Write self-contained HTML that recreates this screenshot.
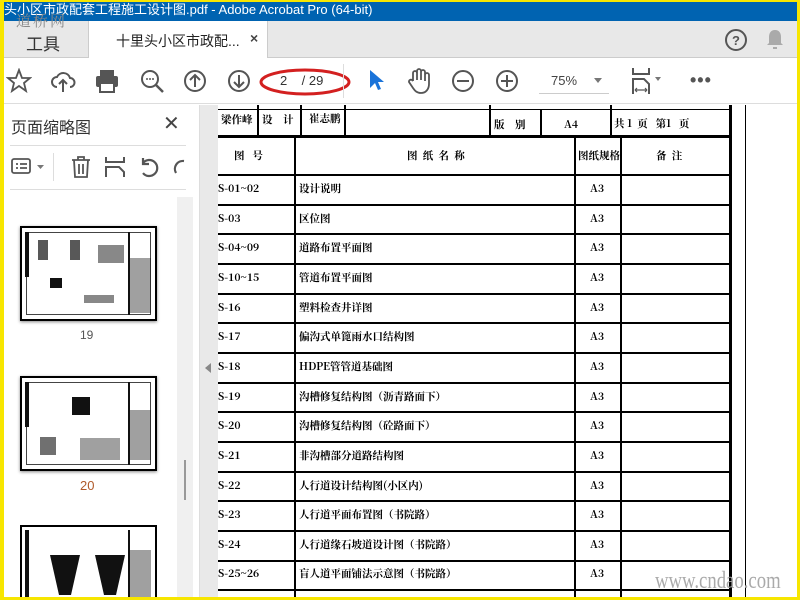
<!DOCTYPE html>
<html><head><meta charset="utf-8"><style>
*{margin:0;padding:0;box-sizing:border-box}
body{width:800px;height:600px;overflow:hidden;position:relative;background:#fff;font-family:"Liberation Sans","Noto Sans CJK SC",sans-serif}
.a{position:absolute}
.t{font-family:"Noto Serif CJK SC",serif;font-weight:bold;font-size:10.5px;line-height:12px;color:#000;white-space:nowrap}
.hl{position:absolute;height:1.5px;background:#000}
.vl{position:absolute;width:1.5px;background:#000}
svg{position:absolute}
.th{position:absolute;background:#111}
</style></head><body>
<div class="a" style="left:0;top:0;width:800px;height:21px;background:#0063b1;color:#fff;font-size:13px;line-height:20px;padding-left:4px;white-space:nowrap">头小区市政配套工程施工设计图.pdf - Adobe Acrobat Pro (64-bit)</div>
<div class="a" style="left:0;top:21px;width:800px;height:37px;background:#e8e8e8;border-bottom:1px solid #ccc"></div>
<div class="a" style="left:26px;top:30px;font-size:17px;color:#333">工具</div>
<div class="a" style="left:16px;top:10px;font-size:15px;color:#888;font-family:'Noto Serif CJK SC',serif;letter-spacing:2px">道桥网</div>
<div class="a" style="left:88px;top:21px;width:180px;height:38px;background:#fff;border-left:1px solid #ccc;border-right:1px solid #ccc"></div>
<div class="a" style="left:116px;top:31px;font-size:14px;color:#222">十里头小区市政配...</div>
<div class="a" style="left:250px;top:30px;font-size:14px;color:#444;font-weight:bold">×</div>
<svg style="left:724px;top:28px" width="24" height="24"><circle cx="12" cy="12" r="10" fill="none" stroke="#555" stroke-width="2"/><text x="12" y="17" font-size="13" text-anchor="middle" fill="#555" font-weight="bold" font-family="Liberation Sans">?</text></svg>
<svg style="left:765px;top:28px" width="20" height="22"><path d="M10 2c-4 0-6 3-6 7v6l-2 2h16l-2-2V9c0-4-2-7-6-7z M8 19h4v2H8z" fill="#aaa"/></svg>
<div class="a" style="left:0;top:58px;width:800px;height:46px;background:#fff;border-bottom:1px solid #ddd"></div>
<svg style="left:6px;top:68px" width="26" height="26"><path d="M13 2l3 8h8l-6 5 2 8-7-5-7 5 2-8-6-5h8z" fill="none" stroke="#555" stroke-width="1.8"/></svg>
<svg style="left:50px;top:68px" width="26" height="26"><path d="M7 19a5 5 0 0 1 0-10 7 7 0 0 1 13 1 4.5 4.5 0 0 1 0 9M13 24V12M9 16l4-4 4 4" fill="none" stroke="#555" stroke-width="2"/></svg>
<svg style="left:94px;top:68px" width="26" height="26"><rect x="6" y="2" width="14" height="6" fill="#555"/><rect x="2" y="8" width="22" height="11" rx="2" fill="#555"/><rect x="6" y="15" width="14" height="9" fill="#fff" stroke="#555" stroke-width="2"/></svg>
<svg style="left:139px;top:68px" width="26" height="26"><circle cx="11" cy="11" r="8" fill="none" stroke="#555" stroke-width="2"/><path d="M17 17l7 7" stroke="#555" stroke-width="2.5"/><circle cx="8" cy="11" r="1" fill="#555"/><circle cx="11" cy="11" r="1" fill="#555"/><circle cx="14" cy="11" r="1" fill="#555"/></svg>
<svg style="left:183px;top:69px" width="24" height="24"><circle cx="12" cy="12" r="10" fill="none" stroke="#555" stroke-width="2"/><path d="M12 18V6M7 11l5-5 5 5" fill="none" stroke="#555" stroke-width="2"/></svg>
<svg style="left:227px;top:69px" width="24" height="24"><circle cx="12" cy="12" r="10" fill="none" stroke="#555" stroke-width="2"/><path d="M12 6v12M7 13l5 5 5-5" fill="none" stroke="#555" stroke-width="2"/></svg>
<svg style="left:258px;top:66px" width="96" height="32"><ellipse cx="47" cy="16" rx="44" ry="12" fill="none" stroke="#d32020" stroke-width="3"/></svg>
<div class="a" style="left:280px;top:73px;font-size:13px;color:#333">2&nbsp;&nbsp;&nbsp;&nbsp;/ 29</div>
<div class="a" style="left:343px;top:64px;width:1px;height:34px;background:#ddd"></div>
<svg style="left:367px;top:68px" width="18" height="24"><path d="M3 2v18l5-5 3 7 3-1-3-7h6z" fill="#1a73d9"/></svg>
<svg style="left:406px;top:67px" width="26" height="28"><path d="M7 14V6a2 2 0 0 1 4 0v7V4a2 2 0 0 1 4 0v9V5a2 2 0 0 1 4 0v9V8a2 2 0 0 1 4 0v9c0 5-3 9-8 9-4 0-6-2-8-5l-4-6a2 2 0 0 1 3-2l1 1" fill="none" stroke="#555" stroke-width="1.8"/></svg>
<svg style="left:451px;top:69px" width="24" height="24"><circle cx="12" cy="12" r="10" fill="none" stroke="#555" stroke-width="2"/><path d="M6 12h12" stroke="#555" stroke-width="2"/></svg>
<svg style="left:495px;top:69px" width="24" height="24"><circle cx="12" cy="12" r="10" fill="none" stroke="#555" stroke-width="2"/><path d="M6 12h12M12 6v12" stroke="#555" stroke-width="2"/></svg>
<div class="a" style="left:551px;top:73px;font-size:13px;color:#444">75%</div>
<div class="a" style="left:594px;top:78px;width:0;height:0;border-left:4px solid transparent;border-right:4px solid transparent;border-top:5px solid #777"></div>
<div class="a" style="left:539px;top:93px;width:70px;height:1px;background:#ccc"></div>
<svg style="left:630px;top:67px" width="34" height="28"><path d="M3 1v6h16V1" fill="none" stroke="#555" stroke-width="2"/><path d="M3 27V12h11l5 5v10" fill="none" stroke="#555" stroke-width="2"/><path d="M5 23h12M5 23l2-2M5 23l2 2M17 23l-2-2M17 23l-2 2" stroke="#555" stroke-width="1.2" fill="none"/><path d="M25 10h6l-3 4z" fill="#777"/></svg>
<div class="a" style="left:690px;top:70px;font-size:18px;color:#555;letter-spacing:1px;font-weight:bold">•••</div>
<div class="a" style="left:0;top:105px;width:200px;height:495px;background:#fff;border-right:1px solid #ddd"></div>
<div class="a" style="left:11px;top:114px;font-size:16px;color:#333">页面缩略图</div>
<div class="a" style="left:163px;top:111px;font-size:20px;color:#444">✕</div>
<div class="a" style="left:10px;top:145px;width:176px;height:1px;background:#ddd"></div>
<svg style="left:11px;top:156px" width="36" height="22"><rect x="1" y="3" width="18" height="14" rx="2" fill="none" stroke="#555" stroke-width="1.8"/><path d="M5 8h2M9 8h7M5 12h2M9 12h7" stroke="#555" stroke-width="1.8"/><path d="M26 9h7l-3.5 4z" fill="#777"/></svg>
<div class="a" style="left:53px;top:153px;width:1px;height:28px;background:#ddd"></div>
<svg style="left:70px;top:155px" width="22" height="24"><path d="M2 5h18M8 5V2h6v3M4 5l1 17h12l1-17M9 9v10M13 9v10" fill="none" stroke="#555" stroke-width="1.8"/></svg>
<svg style="left:104px;top:155px" width="22" height="24"><path d="M2 2v5h18V2M2 22V12h13l5 5v5" fill="none" stroke="#555" stroke-width="2"/></svg>
<svg style="left:137px;top:155px" width="24" height="24"><path d="M6 8a8 8 0 1 1 0 10M6 3v6h6" fill="none" stroke="#555" stroke-width="2.2"/></svg>
<svg style="left:170px;top:155px" width="16" height="24"><path d="M14 6a8 8 0 0 0-8 12" fill="none" stroke="#555" stroke-width="2.2"/></svg>
<div class="a" style="left:10px;top:189px;width:176px;height:1px;background:#ddd"></div>
<div class="a" style="left:177px;top:197px;width:16px;height:403px;background:#f0f0f0"></div>
<div class="a" style="left:184px;top:460px;width:2px;height:40px;background:#999"></div>
<div class="a" style="left:20px;top:226px;width:137px;height:95px;border:2px solid #000;background:#fff;box-shadow:0 1px 3px #888"></div>
<div class="a" style="left:26px;top:232px;width:125px;height:83px;border:1px solid #444;background:#fff"></div>
<div class="th" style="left:25px;top:232px;width:4px;height:45px"></div>
<div class="th" style="left:38px;top:240px;width:10px;height:20px;opacity:.7"></div>
<div class="th" style="left:70px;top:240px;width:10px;height:20px;opacity:.7"></div>
<div class="th" style="left:98px;top:245px;width:26px;height:18px;opacity:.5"></div>
<div class="th" style="left:50px;top:278px;width:12px;height:10px"></div>
<div class="th" style="left:84px;top:295px;width:30px;height:8px;opacity:.5"></div>
<div class="th" style="left:128px;top:232px;width:2px;height:83px"></div>
<div class="th" style="left:130px;top:258px;width:21px;height:55px;opacity:.4"></div>
<div class="a" style="left:80px;top:328px;font-size:12px;color:#555">19</div>
<div class="a" style="left:20px;top:376px;width:137px;height:95px;border:2px solid #000;background:#fff;box-shadow:0 1px 3px #888"></div>
<div class="a" style="left:26px;top:382px;width:125px;height:83px;border:1px solid #444;background:#fff"></div>
<div class="th" style="left:25px;top:382px;width:4px;height:45px"></div>
<div class="th" style="left:72px;top:397px;width:18px;height:18px"></div>
<div class="th" style="left:40px;top:437px;width:16px;height:18px;opacity:.6"></div>
<div class="th" style="left:80px;top:438px;width:40px;height:22px;opacity:.4"></div>
<div class="th" style="left:128px;top:382px;width:2px;height:83px"></div>
<div class="th" style="left:130px;top:410px;width:21px;height:50px;opacity:.4"></div>
<div class="a" style="left:80px;top:478px;font-size:13px;color:#b05a2a">20</div>
<div class="a" style="left:20px;top:525px;width:137px;height:75px;border:2px solid #000;border-bottom:none;background:#fff"></div>
<div class="th" style="left:25px;top:530px;width:4px;height:70px"></div>
<div class="a" style="left:50px;top:555px;width:30px;height:40px;background:#111;clip-path:polygon(0 0,100% 0,70% 100%,30% 100%)"></div>
<div class="a" style="left:95px;top:555px;width:30px;height:40px;background:#111;clip-path:polygon(0 0,100% 0,70% 100%,30% 100%)"></div>
<div class="th" style="left:128px;top:530px;width:2px;height:70px"></div>
<div class="th" style="left:130px;top:550px;width:21px;height:50px;opacity:.4"></div>
<div class="a" style="left:200px;top:105px;width:18px;height:495px;background:#e9e9e9"></div>
<div class="a" style="left:205px;top:363px;width:0;height:0;border-top:5px solid transparent;border-bottom:5px solid transparent;border-right:6px solid #888"></div>
<div class="a" style="left:218px;top:105px;width:582px;height:495px;background:#fff"></div>
<div class="vl" style="left:729px;top:105px;height:495px;width:2.5px"></div>
<div class="vl" style="left:745px;top:105px;height:495px;width:1px"></div>
<div class="hl" style="left:218px;top:109px;width:512px;height:1px"></div>
<div class="hl" style="left:218px;top:135px;width:512px;height:3px"></div>
<div class="vl" style="left:257px;top:105px;height:30px"></div>
<div class="vl" style="left:300px;top:105px;height:30px"></div>
<div class="vl" style="left:344px;top:105px;height:30px"></div>
<div class="vl" style="left:489px;top:105px;height:30px"></div>
<div class="vl" style="left:540px;top:109px;height:26px"></div>
<div class="vl" style="left:610px;top:105px;height:30px"></div>
<div class="t a" style="left:221px;top:114px">梁作峰</div>
<div class="t a" style="left:262px;top:114px">设&nbsp;&nbsp;&nbsp;&nbsp;计</div>
<div class="t a" style="left:309px;top:113px">崔志鹏</div>
<div class="t a" style="left:494px;top:119px">版&nbsp;&nbsp;&nbsp;&nbsp;别</div>
<div class="t a" style="left:564px;top:119px">A4</div>
<div class="t a" style="left:614px;top:118px">共 1&nbsp;&nbsp;页&nbsp;&nbsp;&nbsp;第1&nbsp;&nbsp;&nbsp;页</div>
<div class="vl" style="left:294px;top:137px;height:463px"></div>
<div class="vl" style="left:574px;top:137px;height:463px"></div>
<div class="vl" style="left:620px;top:137px;height:463px"></div>
<div class="t a" style="left:234px;top:150px">图&nbsp;&nbsp;&nbsp;号</div>
<div class="t a" style="left:407px;top:150px">图&nbsp;&nbsp;纸&nbsp;&nbsp;名&nbsp;&nbsp;称</div>
<div class="t a" style="left:578px;top:150px">图纸规格</div>
<div class="t a" style="left:656px;top:150px">备&nbsp;&nbsp;注</div>
<div class="hl" style="left:218px;top:174px;width:512px"></div>
<div class="hl" style="left:218px;top:204px;width:512px"></div>
<div class="hl" style="left:218px;top:233px;width:512px"></div>
<div class="hl" style="left:218px;top:263px;width:512px"></div>
<div class="hl" style="left:218px;top:293px;width:512px"></div>
<div class="hl" style="left:218px;top:322px;width:512px"></div>
<div class="hl" style="left:218px;top:352px;width:512px"></div>
<div class="hl" style="left:218px;top:382px;width:512px"></div>
<div class="hl" style="left:218px;top:411px;width:512px"></div>
<div class="hl" style="left:218px;top:441px;width:512px"></div>
<div class="hl" style="left:218px;top:471px;width:512px"></div>
<div class="hl" style="left:218px;top:500px;width:512px"></div>
<div class="hl" style="left:218px;top:530px;width:512px"></div>
<div class="hl" style="left:218px;top:560px;width:512px"></div>
<div class="hl" style="left:218px;top:589px;width:512px"></div>
<div class="t a" style="left:218px;top:183px">S-01~02</div><div class="t a" style="left:299px;top:183px">设计说明</div><div class="t a" style="left:590px;top:183px">A3</div>
<div class="t a" style="left:218px;top:213px">S-03</div><div class="t a" style="left:299px;top:213px">区位图</div><div class="t a" style="left:590px;top:213px">A3</div>
<div class="t a" style="left:218px;top:242px">S-04~09</div><div class="t a" style="left:299px;top:242px">道路布置平面图</div><div class="t a" style="left:590px;top:242px">A3</div>
<div class="t a" style="left:218px;top:272px">S-10~15</div><div class="t a" style="left:299px;top:272px">管道布置平面图</div><div class="t a" style="left:590px;top:272px">A3</div>
<div class="t a" style="left:218px;top:302px">S-16</div><div class="t a" style="left:299px;top:302px">塑料检查井详图</div><div class="t a" style="left:590px;top:302px">A3</div>
<div class="t a" style="left:218px;top:331px">S-17</div><div class="t a" style="left:299px;top:331px">偏沟式单篦雨水口结构图</div><div class="t a" style="left:590px;top:331px">A3</div>
<div class="t a" style="left:218px;top:361px">S-18</div><div class="t a" style="left:299px;top:361px">HDPE管管道基础图</div><div class="t a" style="left:590px;top:361px">A3</div>
<div class="t a" style="left:218px;top:391px">S-19</div><div class="t a" style="left:299px;top:391px">沟槽修复结构图（沥青路面下）</div><div class="t a" style="left:590px;top:391px">A3</div>
<div class="t a" style="left:218px;top:420px">S-20</div><div class="t a" style="left:299px;top:420px">沟槽修复结构图（砼路面下）</div><div class="t a" style="left:590px;top:420px">A3</div>
<div class="t a" style="left:218px;top:450px">S-21</div><div class="t a" style="left:299px;top:450px">非沟槽部分道路结构图</div><div class="t a" style="left:590px;top:450px">A3</div>
<div class="t a" style="left:218px;top:480px">S-22</div><div class="t a" style="left:299px;top:480px">人行道设计结构图(小区内)</div><div class="t a" style="left:590px;top:480px">A3</div>
<div class="t a" style="left:218px;top:509px">S-23</div><div class="t a" style="left:299px;top:509px">人行道平面布置图（书院路）</div><div class="t a" style="left:590px;top:509px">A3</div>
<div class="t a" style="left:218px;top:539px">S-24</div><div class="t a" style="left:299px;top:539px">人行道缘石坡道设计图（书院路）</div><div class="t a" style="left:590px;top:539px">A3</div>
<div class="t a" style="left:218px;top:568px">S-25~26</div><div class="t a" style="left:299px;top:568px">盲人道平面铺法示意图（书院路）</div><div class="t a" style="left:590px;top:568px">A3</div>
<div class="a" style="left:655px;top:568px;font-family:'Liberation Serif',serif;font-size:24px;color:#aaa;transform:scaleX(0.78);transform-origin:left;white-space:nowrap">www.cndao.com</div>
<div class="a" style="left:0;top:0;width:800px;height:600px;border:3px solid #f7e600;border-top-width:2px;border-left-width:4px"></div>
</body></html>
